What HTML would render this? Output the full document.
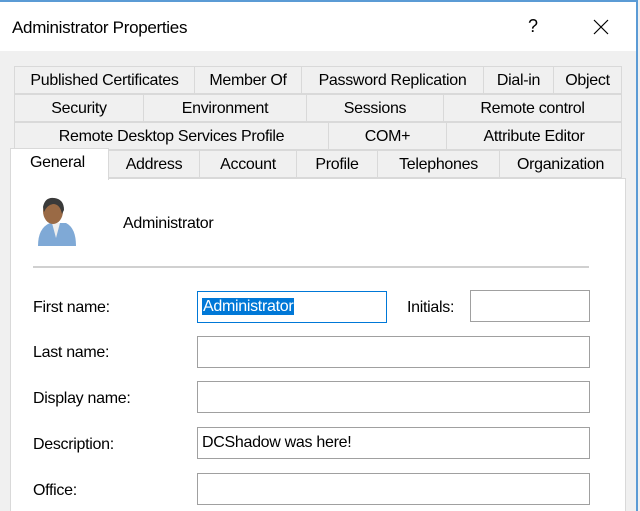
<!DOCTYPE html>
<html><head><meta charset="utf-8"><style>
*{margin:0;padding:0;box-sizing:border-box}
html,body{width:640px;height:511px;overflow:hidden}
body{background:#f0f0f0;font-family:"Liberation Sans",sans-serif;font-size:16px;color:#000;position:relative;letter-spacing:-0.3px}
.a{position:absolute}
.title{left:0;top:0;width:640px;height:51px;background:#fff;border-top:2px solid #5b9bd5}
.tab{position:absolute;height:28px;border:1px solid #d9d9d9;background:#f0f0f0;text-align:center;line-height:28px;white-space:nowrap}
.panel{left:10px;top:178px;width:616px;height:340px;background:#fff;border:1px solid #d9d9d9}
.lbl{position:absolute;left:33px}
.box{position:absolute;background:#fff;border:1px solid #a0a0a0;height:32px;line-height:30px;padding-left:4px}
</style></head><body>
<div class="a title"></div>
<div class="a" style="left:12px;top:18px;font-size:17px">Administrator Properties</div>
<div class="a" style="left:528px;top:16px;font-size:18px">?</div>
<svg class="a" style="left:593px;top:19px" width="16" height="16"><path d="M1 1L15 15M15 1L1 15" stroke="#000" stroke-width="1.2"/></svg>
<div class="a" style="left:636px;top:0;width:2px;height:511px;background:#5b9bd5"></div>
<div class="a" style="left:638px;top:0;width:2px;height:511px;background:#f0f0f0"></div>

<div class="tab" style="left:14px;top:66px;width:181px">Published Certificates</div>
<div class="tab" style="left:194px;top:66px;width:108px">Member Of</div>
<div class="tab" style="left:301px;top:66px;width:183px">Password Replication</div>
<div class="tab" style="left:483px;top:66px;width:71px">Dial-in</div>
<div class="tab" style="left:553px;top:66px;width:69px">Object</div>

<div class="tab" style="left:14px;top:94px;width:130px">Security</div>
<div class="tab" style="left:143px;top:94px;width:164px">Environment</div>
<div class="tab" style="left:306px;top:94px;width:138px">Sessions</div>
<div class="tab" style="left:443px;top:94px;width:179px">Remote control</div>

<div class="tab" style="left:14px;top:122px;width:315px">Remote Desktop Services Profile</div>
<div class="tab" style="left:328px;top:122px;width:119px">COM+</div>
<div class="tab" style="left:446px;top:122px;width:176px">Attribute Editor</div>

<div class="tab" style="left:108px;top:150px;width:92px">Address</div>
<div class="tab" style="left:199px;top:150px;width:98px">Account</div>
<div class="tab" style="left:296px;top:150px;width:82px">Profile</div>
<div class="tab" style="left:377px;top:150px;width:123px">Telephones</div>
<div class="tab" style="left:499px;top:150px;width:123px">Organization</div>

<div class="a panel"></div>
<div class="tab" style="left:10px;top:148px;width:99px;height:32px;background:#fff;border-bottom:none;line-height:27px;text-align:left;padding-left:19px">General</div>

<svg class="a" style="left:36px;top:196px" width="42" height="54">
<path d="M2 50 Q2 32 14 27 L30 27 Q40 32 40 50 Z" fill="#7fa9d6"/>
<path d="M16 27 L20 42 L24 27 Z" fill="#eee"/>
<ellipse cx="17" cy="15" rx="10" ry="13" fill="#9a6a45"/>
<path d="M7 11 Q9 1 18 2 Q28 3 28 14 L26 18 Q24 8 17 8 Q11 9 8 16 Z" fill="#3a3a3a"/>
</svg>
<div class="a" style="left:123px;top:215px">Administrator</div>
<div class="a" style="left:33px;top:266px;width:556px;height:2px;background:#d0d0d0"></div>

<div class="lbl" style="top:299px">First name:</div>
<div class="box" style="left:197px;top:291px;width:190px;border-color:#0078d7"><span style="background:#0078d7;color:#fff;padding:0 1px">Administrator</span></div>
<div class="a" style="left:407px;top:299px">Initials:</div>
<div class="box" style="left:470px;top:290px;width:120px"></div>

<div class="lbl" style="top:344px">Last name:</div>
<div class="box" style="left:197px;top:336px;width:393px"></div>
<div class="lbl" style="top:390px">Display name:</div>
<div class="box" style="left:197px;top:381px;width:393px"></div>
<div class="lbl" style="top:436px">Description:</div>
<div class="box" style="left:197px;top:427px;width:393px">DCShadow was here!</div>
<div class="lbl" style="top:482px">Office:</div>
<div class="box" style="left:197px;top:473px;width:393px"></div>
</body></html>
